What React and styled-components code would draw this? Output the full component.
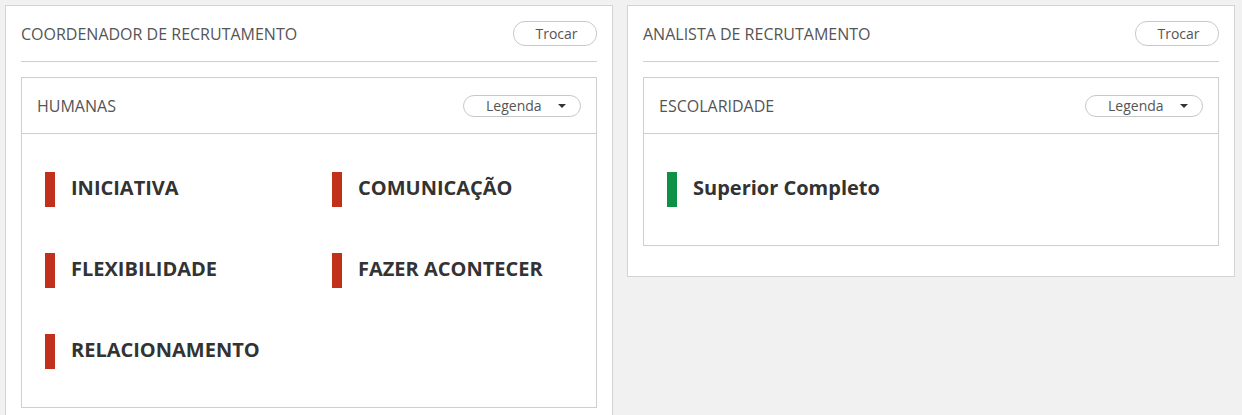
import styled, { createGlobalStyle } from "styled-components";

const GlobalStyle = createGlobalStyle`
  body {
    margin: 0;
    background: #f1f1f1;
    font-family: "Open Sans", "Noto Sans", sans-serif;
    color: #555;
  }
`;

const Page = styled.div`
  display: grid;
  grid-template-columns: 608px 608px;
  gap: 14px;
  align-items: start;
  padding: 5px 7px 0 5px;
`;

const Card = styled.section`
  background: #fff;
  border: 1px solid #d4d4d4;
  padding: 15px 15px 30px;
`;

const CardHeader = styled.header`
  display: flex;
  align-items: center;
  justify-content: space-between;
  height: 25px;
  padding-bottom: 15px;
  border-bottom: 1px solid #cfcfcf;
  margin-bottom: 15px;
`;

const Title = styled.h2`
  margin: 0;
  font-size: 16px;
  font-weight: 400;
  color: #555;
  text-transform: uppercase;
`;

const PillButton = styled.button`
  display: flex;
  align-items: center;
  justify-content: ${({ $caret }) => ($caret ? "space-between" : "center")};
  box-sizing: border-box;
  width: ${({ $w }) => $w}px;
  height: ${({ $h }) => $h}px;
  padding: 0 ${({ $caret }) => ($caret ? "14px 0 22px" : "0 0 3px")};
  background: #fff;
  border: 1px solid #c8c8c8;
  border-radius: 12px;
  font-family: inherit;
  font-size: 14px;
  color: #555;
  cursor: pointer;
`;

const Caret = styled.span`
  width: 0;
  height: 0;
  border-left: 4px solid transparent;
  border-right: 4px solid transparent;
  border-top: 4px solid #333;
`;

const Panel = styled.div`
  border: 1px solid #cfcfcf;
`;

const PanelHeader = styled.div`
  display: flex;
  align-items: center;
  justify-content: space-between;
  height: 55px;
  padding: 0 15px;
  border-bottom: 1px solid #cfcfcf;
`;

const PanelTitle = styled.h3`
  margin: 0;
  font-size: 16px;
  font-weight: 400;
  color: #555;
  text-transform: uppercase;
`;

const ItemGrid = styled.div`
  display: grid;
  grid-template-columns: 1fr 1fr;
  row-gap: 46px;
  padding: 38px 0;
`;

const Item = styled.div`
  display: flex;
  align-items: center;
  gap: 16px;
  padding-left: 23px;
  height: 35px;
`;

const Bar = styled.span`
  flex: none;
  width: 10px;
  height: 35px;
  background: ${({ $color }) => $color};
`;

const ItemLabel = styled.span`
  margin-bottom: 4px;
  font-size: 20px;
  font-weight: 700;
  color: #333;
`;

const RED = "#c0301a";
const GREEN = "#0e9147";

const cards = [
  {
    title: "Coordenador de Recrutamento",
    panel: "Humanas",
    items: [
      { label: "INICIATIVA", color: RED },
      { label: "COMUNICAÇÃO", color: RED },
      { label: "FLEXIBILIDADE", color: RED },
      { label: "FAZER ACONTECER", color: RED },
      { label: "RELACIONAMENTO", color: RED },
    ],
  },
  {
    title: "Analista de Recrutamento",
    panel: "Escolaridade",
    items: [{ label: "Superior Completo", color: GREEN }],
  },
];

export default function App() {
  return (
    <>
      <GlobalStyle />
      <Page>
        {cards.map((card) => (
          <Card key={card.title}>
            <CardHeader>
              <Title>{card.title}</Title>
              <PillButton $w={84} $h={25}>
                Trocar
              </PillButton>
            </CardHeader>
            <Panel>
              <PanelHeader>
                <PanelTitle>{card.panel}</PanelTitle>
                <PillButton $w={118} $h={22} $caret>
                  Legenda
                  <Caret />
                </PillButton>
              </PanelHeader>
              <ItemGrid>
                {card.items.map((item) => (
                  <Item key={item.label}>
                    <Bar $color={item.color} />
                    <ItemLabel>{item.label}</ItemLabel>
                  </Item>
                ))}
              </ItemGrid>
            </Panel>
          </Card>
        ))}
      </Page>
    </>
  );
}
